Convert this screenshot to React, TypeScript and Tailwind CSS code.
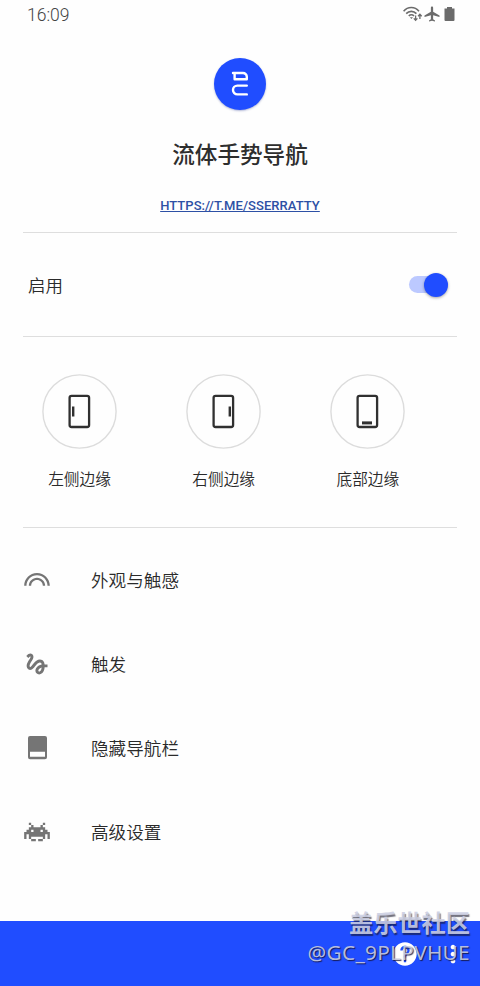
import React from 'react';
import {
  MdAirplanemodeActive,
  MdGesture,
  MdHelp,
  MdLooks,
  MdMoreVert,
} from 'react-icons/md';

type Edge = 'left' | 'right' | 'bottom';

const edges: { id: Edge; label: string }[] = [
  { id: 'left', label: '左侧边缘' },
  { id: 'right', label: '右侧边缘' },
  { id: 'bottom', label: '底部边缘' },
];

// handle position inside the phone outline
const handles: Record<Edge, { x: number; y: number; w: number; h: number }> = {
  left: { x: 30, y: 32.5, w: 2.4, h: 10 },
  right: { x: 42.6, y: 32.5, w: 2.4, h: 10 },
  bottom: { x: 32, y: 47.4, w: 10, h: 3 },
};

function EdgeIcon({ edge }: { edge: Edge }) {
  const { x, y, w, h } = handles[edge];
  return (
    <svg width="75" height="75" viewBox="0 0 75 75" fill="none">
      <circle cx="37.5" cy="37.5" r="36.6" stroke="#dcdcdc" strokeWidth="1.4" />
      <rect x="27.6" y="21.8" width="19.5" height="31.2" rx="2" stroke="#303030" strokeWidth="2.3" />
      <rect x={x} y={y} width={w} height={h} fill="#303030" />
    </svg>
  );
}

function InvaderIcon() {
  return (
    <svg width="28" height="28" viewBox="0 0 24 24" fill="currentColor">
      <path d="M7 6H5V4h2v2m10 0h2V4h-2v2m6 6v6h-2v-4h-2v4h-2v-2H7v2H5v-4H3v4H1v-6h2v-2h2V8h2V6h2v2h6V6h2v2h2v2h2v2h2m-8-2v2h2v-2h-2m-8 2h2v-2H7v2m4 6H7v2h4v-2m6 0h-4v2h4v-2z" />
    </svg>
  );
}

function NavBarIcon() {
  return (
    <svg width="28" height="28" viewBox="0 0 28 28">
      <path
        fill="currentColor"
        fillRule="evenodd"
        d="M7 2h15a2 2 0 0 1 2 2v19.2a2 2 0 0 1-2 2H7a2 2 0 0 1-2-2V4a2 2 0 0 1 2-2zM7 17.8v5h15v-5z"
      />
    </svg>
  );
}

function WifiIcon() {
  return (
    <svg width="20" height="16" viewBox="0 0 20 16" fill="none" stroke="currentColor">
      <path d="M.6 5.2C4.8.3 11.8.3 16 5.2M3.2 7.6c2.8-3 7.4-3 10.2 0M5.8 10c1.5-1.6 3.7-1.6 5.2 0" strokeWidth="1.6" />
      <path d="M6.8 11.2h3.2l-1.6 1.9z" fill="currentColor" stroke="none" />
      <path d="M12.6 9.5v4.8M10.8 12.4l1.8 1.9 1.8-1.9M16.9 13V8.2M15.1 10.2l1.8-1.9 1.8 1.9" strokeWidth="1.3" />
    </svg>
  );
}

const menuItems = [
  { label: '外观与触感', icon: <MdLooks size={28} /> },
  { label: '触发', icon: <MdGesture size={28} /> },
  { label: '隐藏导航栏', icon: <NavBarIcon /> },
  { label: '高级设置', icon: <InvaderIcon /> },
];

function StatusBar() {
  return (
    <div className="flex h-[29px] items-center justify-between pl-[27px] pr-[25px] text-[#6b6b6b]">
      <span className="pt-[2px] font-[Roboto] text-[17.5px] font-light leading-none text-[#444]">16:09</span>
      <div className="-mt-px flex items-center">
        <WifiIcon />
        <MdAirplanemodeActive size={18} className="mr-px" />
        <svg width="11" height="14" viewBox="0 0 11 14" className="ml-[2px]">
          <path fill="currentColor" d="M3 0h5v1.6h2.5V13q0 1-1 1h-8q-1 0-1-1V1.6H3z" />
        </svg>
      </div>
    </div>
  );
}

function Header() {
  return (
    <div className="mx-[23px] flex h-[204px] flex-col items-center border-b border-[#dedede] pt-[29px]">
      <div className="flex size-[52px] items-center justify-center rounded-full bg-[#204dff] shadow-[0_1px_2px_rgba(30,50,140,0.35)]">
        <svg width="18" height="28" viewBox="0 0 18 28" fill="none" stroke="#fff" strokeWidth="2.4" strokeLinecap="round">
          <path d="M2 3h10a3.8 3.8 0 0 1 3.8 3.8v2.4H3.6V3" strokeLinejoin="round" />
          <path d="M15.8 15.6H6.4a4.4 4.4 0 0 0 0 8.8h9.4" />
        </svg>
      </div>
      <h1 className="mt-[28px] text-[22.6px] font-medium leading-[32px] text-[#2e2e2e]">流体手势导航</h1>
      <a className="mt-[28px] font-[Roboto] text-[13px] font-medium leading-[16px] tracking-[0.06px] text-[#2d50a5] underline">
        HTTPS://T.ME/SSERRATTY
      </a>
    </div>
  );
}

export default function App() {
  return (
    <div className="flex h-[986px] w-[480px] flex-col overflow-hidden bg-[#fefefe] font-['Noto_Sans_CJK_SC',sans-serif] font-[350] text-[#2a2a2a]">
      <StatusBar />
      <Header />

      {/* Enable switch */}
      <div className="mx-[23px] flex h-[104px] items-center justify-between border-b border-[#dedede] pl-[5px] pr-[9px]">
        <span className="pt-[2px] text-[17.5px]">启用</span>
        <div className="flex h-[17px] w-[39px] items-center justify-end rounded-full bg-[#bcc9ff]">
          <div className="size-6 shrink-0 rounded-full bg-[#204dff] shadow-[0_1px_3px_rgba(0,0,0,0.35)]" />
        </div>
      </div>

      {/* Edges */}
      <div className="mx-[23px] flex h-[191px] gap-[69.2px] border-b border-[#dedede] pl-[19px] pt-[37px]">
        {edges.map(({ id, label }) => (
          <div key={id} className="flex w-[75px] shrink-0 flex-col items-center">
            <EdgeIcon edge={id} />
            <span className="mt-[18px] text-[15.7px] leading-6 whitespace-nowrap">{label}</span>
          </div>
        ))}
      </div>

      {/* Settings list */}
      <div className="flex grow flex-col pt-[10px]">
        {menuItems.map(({ label, icon }) => (
          <div key={label} className="flex h-[84px] items-center pl-[23px]">
            <span className="w-[68px] text-[#757575]">{icon}</span>
            <span className="text-[17.6px] leading-6">{label}</span>
          </div>
        ))}
      </div>

      {/* Bottom bar */}
      <div className="relative flex h-[65px] shrink-0 items-center justify-end bg-[#204dff] text-white">
        <MdHelp size={28} />
        <MdMoreVert size={28} className="ml-[20px] mr-[13px]" />
        <div className="absolute right-[10px] top-[-15px] text-right whitespace-nowrap text-[#cccfe2]/90">
          <div className="text-[24.2px] font-bold leading-[32px] [text-shadow:1px_2px_1px_rgba(20,20,40,0.6)]">盖乐世社区</div>
          <div className="text-[20.8px] font-normal leading-[28px] tracking-[0.3px] font-['Noto_Sans',sans-serif] [text-shadow:1px_1px_1px_rgba(20,20,60,0.85)]">
            @GC_9PLPVHUE
          </div>
        </div>
      </div>
    </div>
  );
}
